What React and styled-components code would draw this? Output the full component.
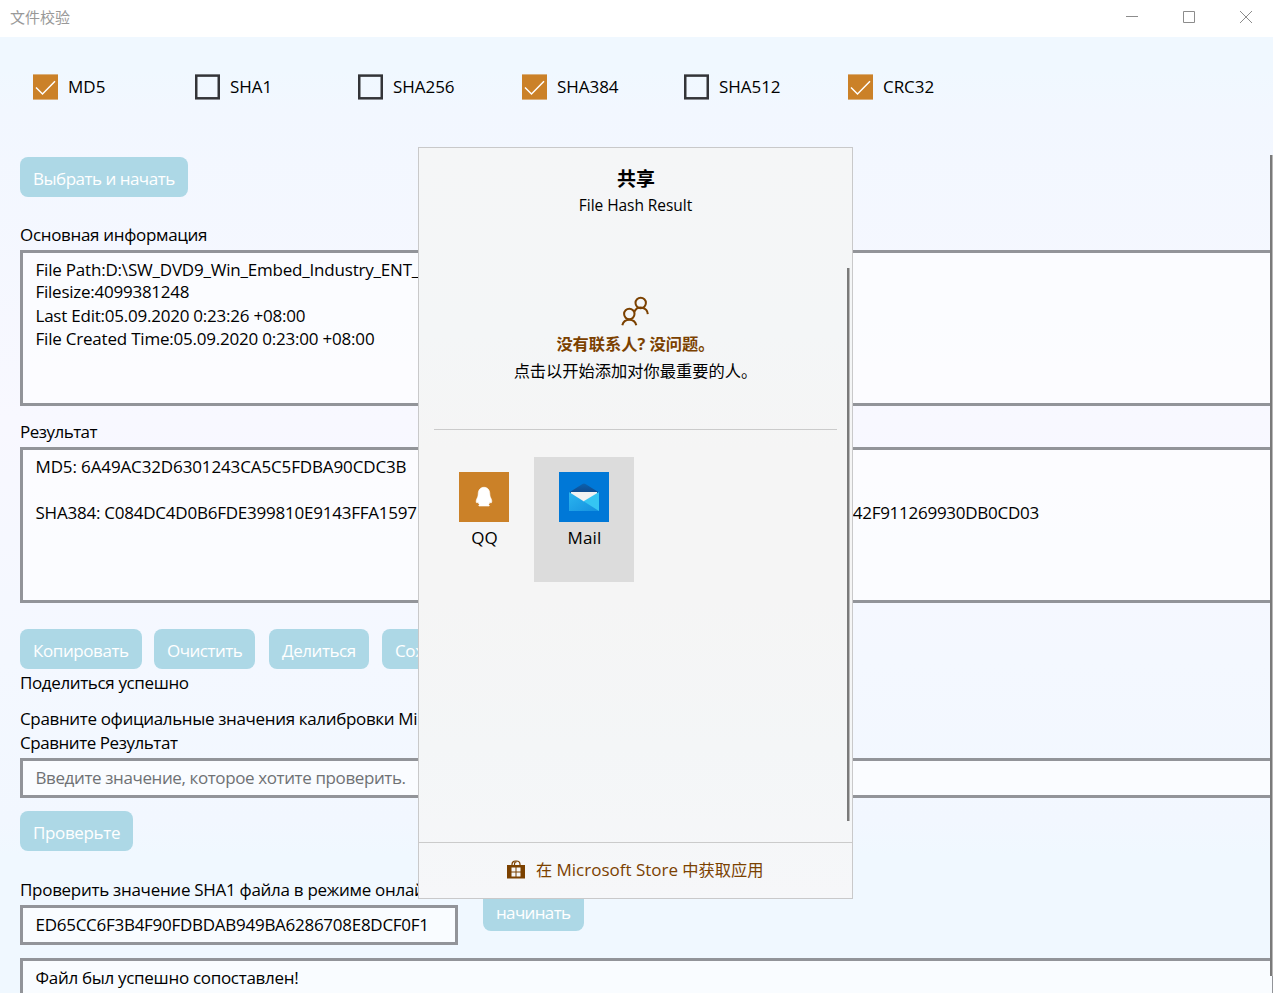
import React from 'react';
import styled, { createGlobalStyle } from 'styled-components';

const GlobalStyle = createGlobalStyle`
  * { box-sizing: border-box; }
  body {
    margin: 0;
    overflow: hidden;
    color: #000;
    font: 17px/23px "Open Sans", "Noto Sans CJK SC", sans-serif;
  }
`;

const Window = styled.div`
  position: relative;
  display: flex;
  flex-direction: column;
  width: 1273px;
  height: 993px;
  overflow: hidden;
  background: linear-gradient(#f0f8ff 70px, #f2f7ff 110px, #f8f8ff 420px, #f4f8ff 660px, #f2f7ff 820px, #f0f8ff 855px);
`;

const TitleBar = styled.header`
  display: flex;
  justify-content: space-between;
  flex: none;
  height: 37px;
  padding: 0 20px 0 10px;
  background: #fff;
  color: #999;
  font-size: 15px;
  line-height: 35px;
`;

const WindowControls = styled.div`
  display: flex;
  gap: 43px;
  padding-top: 10px;
`;

const ControlIcon = styled.svg`
  width: 14px;
  height: 14px;
  fill: none;
  stroke: #8c8c8c;
`;

const Algorithms = styled.div`
  display: grid;
  grid-template-columns: 162px 163px 164px 162px 164px 160px;
  flex: none;
  height: 120px;
  padding: 37px 0 0 33px;
`;

const Option = styled.label`
  display: flex;
  gap: 10px;
  height: 26px;
  line-height: 25px;
`;

const CheckBox = styled.svg`
  width: 25px;
  height: 26px;
`;

const Text = styled.span`
  white-space: pre;
  letter-spacing: ${(p) => p.$track || 0}px;
`;

const Content = styled.main`
  display: flex;
  flex-direction: column;
  align-items: flex-start;
  width: 1255px;
  margin-left: 20px;
`;

const Button = styled.button`
  flex: none;
  width: ${(p) => p.$width}px;
  height: 40px;
  margin: ${(p) => p.$top || 0}px 0 0;
  padding: 3px 0 0 13px;
  border: 0;
  border-radius: 8px;
  background: #add8e6;
  color: #fff;
  font: inherit;
  text-align: left;
  overflow: hidden;
`;

const Line = styled.div`
  flex: none;
  height: ${(p) => p.$height || 23}px;
  margin-top: ${(p) => p.$top || 0}px;
  white-space: pre;
`;

const Field = styled.div`
  flex: none;
  width: 100%;
  height: ${(p) => p.$height || 40}px;
  margin-top: ${(p) => p.$top || 4}px;
  padding: 5px 12.5px;
  border: 3px solid #929499;
  background: rgba(255, 255, 255, 0.6);
  color: ${(p) => (p.$muted ? '#6f7174' : '#000')};
`;

const SplitLine = styled(Line)`
  display: flex;
  justify-content: space-between;
  width: 1003.5px;
`;

const Actions = styled.div`
  display: flex;
  margin-top: 26px;
  & > :nth-child(2) { margin-left: 12px; }
  & > :nth-child(3) { margin-left: 14px; }
  & > :nth-child(4) { margin-left: 13px; }
`;

const OnlineRow = styled.div`
  display: flex;
  align-items: flex-start;
  gap: 25px;
  height: 67px;
  margin-top: 27px;
`;

const OnlineColumn = styled.div`
  width: 438px;
`;

const ScrollThumb = styled.div`
  position: absolute;
  top: ${(p) => p.$top}px;
  right: ${(p) => p.$right}px;
  width: 3px;
  height: ${(p) => p.$height}px;
  background: linear-gradient(90deg, #7a7a7a 2px, #b9b9b9 2px);
`;

const ShareDialog = styled.section`
  position: absolute;
  top: 147px;
  left: 418px;
  display: flex;
  flex-direction: column;
  width: 435px;
  height: 752px;
  border: 1px solid #c9c9ca;
  background: linear-gradient(#f5f6f7, #f4f6f7 25%, #f5f5f5 40%, #f5f5f5 60%, #f4f6f7 80%, #f6f7f9);
`;

const ShareHeader = styled.div`
  display: flex;
  flex-direction: column;
  align-items: center;
  height: 119px;
  padding-top: 19px;
`;

const ShareTitle = styled.h1`
  margin: 0;
  padding-left: 1px;
  font-size: 19px;
  line-height: 25px;
`;

const ShareSubtitle = styled.div`
  margin-top: 2px;
  font-size: 15.5px;
  letter-spacing: -0.05px;
`;

const People = styled.div`
  display: flex;
  flex-direction: column;
  align-items: center;
  height: 163px;
  margin: 0 15px;
  padding-top: 29px;
  border-bottom: 1px solid #cbcbcb;
  font-size: 16.25px;
`;

const PeopleIcon = styled.svg`
  width: 29px;
  height: 30px;
  fill: none;
  stroke: #7b4100;
  stroke-width: 2;
`;

const PeopleTitle = styled.div`
  margin-top: 7px;
  color: #7b4100;
  font-weight: 700;
`;

const PeopleHint = styled.div`
  margin-top: 4px;
`;

const Targets = styled.div`
  display: flex;
  flex: 1;
  padding: 27px 15px;
`;

const Target = styled.div`
  display: flex;
  flex-direction: column;
  align-items: center;
  gap: 4px;
  width: 100px;
  height: 125px;
  padding-top: 15px;
  background: ${(p) => (p.$active ? '#dcdcdc' : 'transparent')};
`;

const TargetName = styled.div`
  padding-left: 1px;
  letter-spacing: 0.15px;
`;

const AppIcon = styled.svg`
  width: 50px;
  height: 50px;
  background: ${(p) => p.$color};
`;

const StoreLink = styled.footer`
  display: flex;
  align-items: center;
  gap: 11px;
  height: 56px;
  padding: 0 0 2px 88px;
  border-top: 1px solid #cbcbcb;
  color: #7b4100;
  font-size: 16.25px;
`;

const StoreIcon = styled.svg`
  width: 18px;
  height: 20px;
`;

const Latin = styled.span`
  font-size: 17px;
`;

const options = [
  { name: 'MD5', checked: true, track: 0 },
  { name: 'SHA1', checked: false, track: 0 },
  { name: 'SHA256', checked: false, track: -0.05 },
  { name: 'SHA384', checked: true, track: -0.05 },
  { name: 'SHA512', checked: false, track: -0.05 },
  { name: 'CRC32', checked: true, track: -0.05 },
];

function Check({ checked }) {
  return checked ? (
    <CheckBox viewBox="0 0 25 26">
      <rect y="0.4" width="25" height="25.2" fill="#cb8128" />
      <path d="M3 13.5 9.5 20 22 7.3" fill="none" stroke="#fff" strokeWidth="1.5" />
    </CheckBox>
  ) : (
    <CheckBox viewBox="0 0 25 26">
      <rect x="1.25" y="1.6" width="22.5" height="22.7" fill="none" stroke="#333438" strokeWidth="2.5" />
    </CheckBox>
  );
}

export default function App() {
  return (
    <Window>
      <GlobalStyle />
      <TitleBar>
        <Text>文件校验</Text>
        <WindowControls>
          <ControlIcon viewBox="0 0 14 14"><path d="M1 6.5h12" /></ControlIcon>
          <ControlIcon viewBox="0 0 14 14"><path d="M1.5 1.5h11v11h-11z" /></ControlIcon>
          <ControlIcon viewBox="0 0 14 14"><path d="M1 1l12 12M13 1 1 13" /></ControlIcon>
        </WindowControls>
      </TitleBar>

      <Algorithms>
        {options.map((o) => (
          <Option key={o.name}>
            <Check checked={o.checked} />
            <Text $track={o.track}>{o.name}</Text>
          </Option>
        ))}
      </Algorithms>

      <Content>
        <Button $width={168}><Text $track={-0.5}>Выбрать и начать</Text></Button>
        <Line $top={26}><Text $track={-0.32}>Основная информация</Text></Line>
        <Field $height={156}>
          <Line $height={22}><Text $track={-0.2}>{'File Path:D:\\SW_DVD9_Win_Embed_Industry_ENT_'}</Text></Line>
          <Line $height={24}><Text $track={-0.25}>Filesize:4099381248</Text></Line>
          <Line><Text $track={-0.23}>Last Edit:05.09.2020 0:23:26 +08:00</Text></Line>
          <Line><Text $track={-0.21}>File Created Time:05.09.2020 0:23:00 +08:00</Text></Line>
        </Field>
        <Line $top={14}><Text $track={-0.52}>Результат</Text></Line>
        <Field $height={156}>
          <Line><Text $track={-0.13}>MD5: 6A49AC32D6301243CA5C5FDBA90CDC3B</Text></Line>
          <SplitLine $top={23}>
            <Text $track={-0.23}>SHA384: C084DC4D0B6FDE399810E9143FFA1597</Text>
            <Text $track={-0.26}>42F911269930DB0CD03</Text>
          </SplitLine>
        </Field>
        <Actions>
          <Button $width={122}><Text $track={-0.42}>Копировать</Text></Button>
          <Button $width={101}><Text $track={-0.5}>Очистить</Text></Button>
          <Button $width={100}><Text $track={-0.45}>Делиться</Text></Button>
          <Button $width={113}><Text $track={-0.4}>Сохранить</Text></Button>
        </Actions>
        <Line $top={2}><Text $track={-0.37}>Поделиться успешно</Text></Line>
        <Line $top={13}><Text $track={-0.345}>Сравните официальные значения калибровки Mi</Text></Line>
        <Line $top={1}><Text $track={-0.45}>Сравните Результат</Text></Line>
        <Field $muted><Text $track={-0.39}>Введите значение, которое хотите проверить.</Text></Field>
        <Button $top={13} $width={113}><Text $track={-0.35}>Проверьте</Text></Button>
        <OnlineRow>
          <OnlineColumn>
            <Line><Text $track={-0.29}>Проверить значение SHA1 файла в режиме онлайн</Text></Line>
            <Field><Text $track={-0.27}>ED65CC6F3B4F90FDBDAB949BA6286708E8DCF0F1</Text></Field>
          </OnlineColumn>
          <Button $top={13} $width={101}><Text $track={-0.65}>начинать</Text></Button>
        </OnlineRow>
        <Field $top={13} $height={80}><Text $track={-0.3}>Файл был успешно сопоставлен!</Text></Field>
      </Content>
      <ScrollThumb $top={155} $right={0} $height={821} />

      <ShareDialog>
        <ShareHeader>
          <ShareTitle>共享</ShareTitle>
          <ShareSubtitle>File Hash Result</ShareSubtitle>
        </ShareHeader>
        <People>
          <PeopleIcon viewBox="0 0 29 30">
            <circle cx="19.700" cy="7" r="5.200" />
            <path d="M13.5 15.500a7 7 0 0 1 13.300 2.600" />
            <circle cx="8.300" cy="18" r="5.200" />
            <path d="M1.300 29.200a7.200 7.200 0 0 1 14 0" />
          </PeopleIcon>
          <PeopleTitle>没有联系人? 没问题。</PeopleTitle>
          <PeopleHint>点击以开始添加对你最重要的人。</PeopleHint>
        </People>
        <Targets>
          <Target>
            <AppIcon $color="#cb8128" viewBox="0 0 50 50">
              <path
                d="M25 15.3c3.6 0 5.6 2.6 5.8 6.3.1 2 .2 3 1 4.4.8 1.500 1.300 3.300.7 4.600-.4.7-1 .3-1.600-.6-.3 1.200-.8 1.900-1.400 2.600.8.4 1 .9.6 1.400H20c-.5-.5-.2-1 .5-1.400-.7-.7-1.200-1.400-1.500-2.600-.6.9-1.200 1.200-1.600.5-.5-1.300 0-3 .8-4.500.8-1.400.9-2.400 1-4.400.2-3.700 2.200-6.300 5.800-6.300z"
                fill="#fff"
                stroke="#fff"
                strokeWidth="0.6"
              />
            </AppIcon>
            <TargetName>QQ</TargetName>
          </Target>
          <Target $active>
            <AppIcon $color="#0078d7" viewBox="0 0 50 50">
              <defs>
                <linearGradient id="flap" x1="0" y1="0" x2="0" y2="1">
                  <stop offset="0" stopColor="#0a62b0" />
                  <stop offset="1" stopColor="#114a8d" />
                </linearGradient>
                <linearGradient id="fold" x1="0" y1="0" x2="1" y2="1">
                  <stop offset="0" stopColor="#2bb5ef" />
                  <stop offset="1" stopColor="#1490df" />
                </linearGradient>
              </defs>
              <path d="M10 20.500 23.500 12q1.500-1 3 0L40 20.500z" fill="url(#flap)" />
              <path d="M12 20h26v10H12z" fill="#f1f1f2" />
              <path d="M40 20v19H25V29z" fill="#35c5f3" />
              <path d="M10 20 40 39H10z" fill="url(#fold)" />
            </AppIcon>
            <TargetName>Mail</TargetName>
          </Target>
        </Targets>
        <StoreLink>
          <StoreIcon viewBox="0 0 18 20">
            <path d="M5 6V4.500C5 2.500 6.500 1 8.500 1h1C11.500 1 13 2.500 13 4.500V6M7.500 6V4q0-2 2-2" fill="none" stroke="#7b4100" strokeWidth="1.200" />
            <path d="M0 5h18v13.500H0z" fill="#7b4100" />
            <path d="M4.500 7.500h4v4h-4zM9.500 7.500h4v4h-4zM4.500 12.500h4v4h-4zM9.500 12.500h4v4h-4z" fill="#f6f7f8" />
          </StoreIcon>
          <Text>在 <Latin>Microsoft Store</Latin> 中获取应用</Text>
        </StoreLink>
        <ScrollThumb $top={120} $right={2} $height={553} />
      </ShareDialog>
    </Window>
  );
}
